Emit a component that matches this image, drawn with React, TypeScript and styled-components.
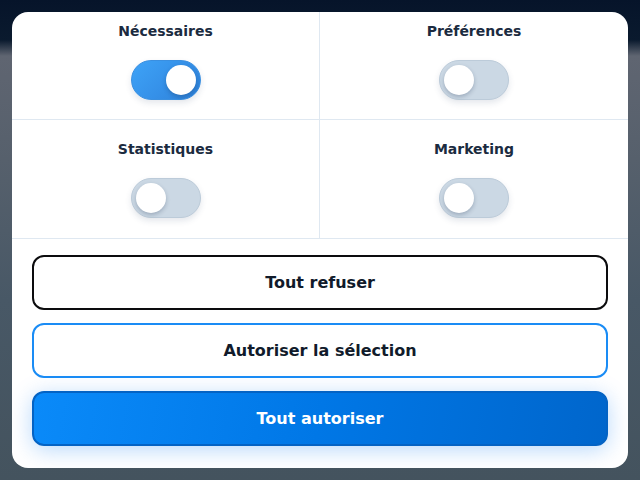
import React, { useState } from "react";
import styled, { createGlobalStyle } from "styled-components";

const Global = createGlobalStyle`
  html, body { margin: 0; padding: 0; }
  body {
    width: 640px;
    height: 480px;
    overflow: hidden;
    font-family: "DejaVu Sans", "Liberation Sans", sans-serif;
    background: linear-gradient(to bottom, #06142a 0px, #0a1a2e 40px, #5f6571 56px, #56606c 160px, #485866 300px, #44535e 480px);
  }
`;

const Stage = styled.div`
  box-sizing: border-box;
  width: 640px;
  height: 480px;
  padding: 12px;
`;

const Card = styled.div`
  box-sizing: border-box;
  width: 616px;
  height: 456px;
  background: #ffffff;
  border-radius: 16px;
  overflow: hidden;
  display: flex;
  flex-direction: column;
`;

const Grid = styled.div`
  display: grid;
  grid-template-columns: 307px 1fr;
`;

const Cell = styled.div<{ $first?: boolean; $right?: boolean }>`
  box-sizing: border-box;
  height: ${(p) => (p.$first ? "108px" : "119px")};
  padding-top: ${(p) => (p.$first ? "9px" : "19px")};
  display: flex;
  flex-direction: column;
  align-items: center;
  gap: 19px;
  border-bottom: 1px solid #dfe8f1;
  border-left: ${(p) => (p.$right ? "1px solid #dfe8f1" : "none")};
`;

const Label = styled.div`
  font-size: 14px;
  line-height: 20px;
  font-weight: 700;
  color: #1b2b40;
`;

const Track = styled.button<{ $on: boolean }>`
  box-sizing: border-box;
  width: 70px;
  height: 40px;
  border-radius: 20px;
  padding: 0;
  cursor: pointer;
  position: relative;
  border: 1px solid ${(p) => (p.$on ? "#3a8fe0" : "#bccbd9")};
  background: ${(p) =>
    p.$on
      ? "linear-gradient(135deg, #3ea3f7 0%, #3590e8 55%, #2d7fd6 100%)"
      : "#cbd8e4"};
  box-shadow: 0 3px 6px rgba(30, 60, 100, 0.12);
`;

const Knob = styled.span<{ $on: boolean }>`
  position: absolute;
  top: 4px;
  left: ${(p) => (p.$on ? "34px" : "4px")};
  width: 30px;
  height: 30px;
  border-radius: 50%;
  background: #ffffff;
  box-shadow: 0 2px 4px rgba(20, 40, 70, 0.25);
`;

const Actions = styled.div`
  display: flex;
  flex-direction: column;
  gap: 13px;
  padding: 16px 20px 0 20px;
`;

const Btn = styled.button<{ $variant: "outline" | "blue" | "primary" }>`
  box-sizing: border-box;
  height: 55px;
  width: 100%;
  border-radius: 12px;
  font-family: "DejaVu Sans", "Liberation Sans", sans-serif;
  font-size: 16px;
  font-weight: 700;
  cursor: pointer;
  color: ${(p) => (p.$variant === "primary" ? "#ffffff" : "#111b2b")};
  background: ${(p) =>
    p.$variant === "primary"
      ? "linear-gradient(100deg, #0a8af9 0%, #0077e6 50%, #0066cc 100%)"
      : "#ffffff"};
  border: 2px solid
    ${(p) =>
      p.$variant === "outline"
        ? "#0c0c0e"
        : p.$variant === "blue"
        ? "#1a8cf5"
        : "#0463c4"};
  box-shadow: ${(p) =>
    p.$variant === "primary" ? "0 4px 22px rgba(0, 120, 240, 0.28)" : "none"};
`;

type Pref = { key: string; label: string };

const prefs: Pref[] = [
  { key: "nec", label: "Nécessaires" },
  { key: "pref", label: "Préférences" },
  { key: "stat", label: "Statistiques" },
  { key: "mkt", label: "Marketing" },
];

export default function App() {
  const [state, setState] = useState<Record<string, boolean>>({
    nec: true,
    pref: false,
    stat: false,
    mkt: false,
  });
  return (
    <Stage>
      <Global />
      <Card>
        <Grid>
          {prefs.map((p, i) => (
            <Cell key={p.key} $first={i < 2} $right={i % 2 === 1}>
              <Label>{p.label}</Label>
              <Track
                $on={state[p.key]}
                onClick={() =>
                  p.key !== "nec" &&
                  setState((s) => ({ ...s, [p.key]: !s[p.key] }))
                }
              >
                <Knob $on={state[p.key]} />
              </Track>
            </Cell>
          ))}
        </Grid>
        <Actions>
          <Btn $variant="outline">Tout refuser</Btn>
          <Btn $variant="blue">Autoriser la sélection</Btn>
          <Btn $variant="primary">Tout autoriser</Btn>
        </Actions>
      </Card>
    </Stage>
  );
}
